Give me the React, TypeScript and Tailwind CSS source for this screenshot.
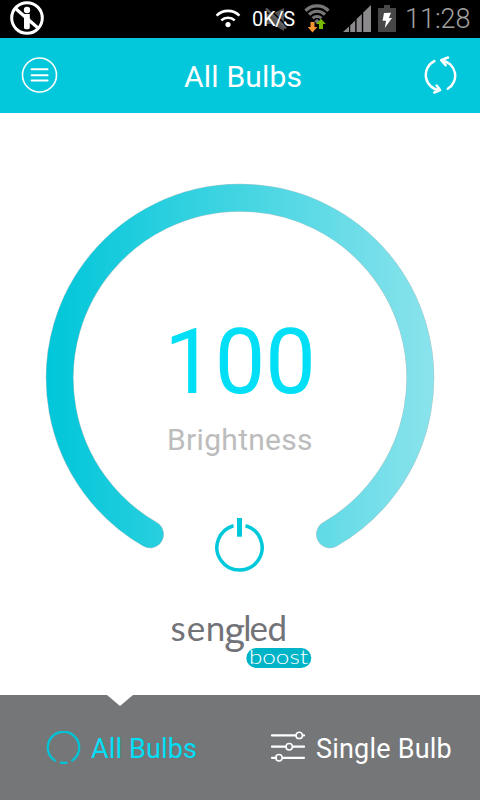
function BlockedIcon() {
  return (
    <svg className="ml-[10px] h-[34px] w-[34px]" viewBox="0 0 34 34" fill="none">
      <circle cx="17" cy="17" r="15.3" stroke="#fff" strokeWidth="3" />
      <circle cx="17" cy="9" r="3.2" fill="#fff" />
      <path d="M5.5 7.5l22.5 19.5" stroke="#fff" strokeWidth="3.2" />
      <path d="M14 13h5.8v13.5q0 1.8-1.5 1.8h-2.8q-1.5 0-1.5-1.8z" fill="#fff" />
      <path d="M12.5 16.5v5M21.8 13.5v4" stroke="#000" strokeWidth="1" />
    </svg>
  );
}

function SpeedWifiIcon() {
  return (
    <svg className="h-[20px] w-[26px]" viewBox="0 0 26 20" fill="none" stroke="#fff" strokeWidth="2.6">
      <path d="M1.6 7.6a16.2 16.2 0 0 1 22.8 0" />
      <path d="M6.3 12.4a9.6 9.6 0 0 1 13.4 0" />
      <circle cx="13" cy="16.6" r="2.6" fill="#fff" stroke="none" />
    </svg>
  );
}

function MuteIcon() {
  return (
    <svg className="absolute left-[13px] top-[6px] h-[26px] w-[22px]" viewBox="0 0 22 26">
      <path d="M1 8h6l12-6v23L7 18H1z" fill="#525252" />
      <path d="M2 1l20 19" stroke="#000" strokeWidth="1.6" />
      <path d="M1 2.5l20 20" stroke="#606060" strokeWidth="2.4" />
    </svg>
  );
}

function DataWifiIcon() {
  return (
    <svg className="h-[30px] w-[26px]" viewBox="0 0 26 30" fill="none">
      <path d="M1.5 7.8a16 16 0 0 1 23 0" stroke="#777" strokeWidth="3.4" />
      <path d="M5 11.6a11.2 11.2 0 0 1 16 0" stroke="#777" strokeWidth="3.2" />
      <path d="M8.6 15.3a6.3 6.3 0 0 1 8.8 0" stroke="#777" strokeWidth="2.8" />
      <path d="M10.4 18.3L13 16l2.6 2.3L13 21z" fill="#777" />
      <path d="M6.5 19h4v5h2.8l-4.800 5.5L3.7 24h2.8z" fill="#f79533" />
      <path d="M15 26v-5h-2.8l4.800-5.2 4.8 5.2H19v5z" fill="#76b900" />
    </svg>
  );
}

function SignalIcon() {
  return (
    <svg className="h-[27px] w-[29px]" viewBox="0 0 29 27" fill="#8b898b">
      <path d="M0 27l6-5.6V27zM7.2 27v-6.8l5-4.8V27zM13.6 27V14l5.2-5v18zM20.2 27V7.6l1.6-1.6L28 0v27z" />
    </svg>
  );
}

function BatteryIcon() {
  return (
    <svg className="h-[27px] w-[18px]" viewBox="0 0 18 27">
      <path d="M0 3h6V0h6v3h6v24H0z" fill="#474747" />
      <path d="M6 8l7-.2-2.2 5.2H14L6.8 23l1.3-7.3H4.6z" fill="#fff" />
    </svg>
  );
}

function StatusBar() {
  return (
    <div className="flex h-[38px] bg-black">
      <div className="pt-px">
        <BlockedIcon />
      </div>
      <div className="ml-[171px] pt-[8px]">
        <SpeedWifiIcon />
      </div>
      <div className="relative ml-[11px] w-[46px]">
        <MuteIcon />
        <span className="relative block pt-[7px] text-[20px] leading-[25px] tracking-[-0.3px] whitespace-nowrap text-white">0K/S</span>
      </div>
      <div className="ml-[6px] pt-[3px]">
        <DataWifiIcon />
      </div>
      <div className="ml-[13px] pt-[5px]">
        <SignalIcon />
      </div>
      <div className="ml-[6px] pt-[5px]">
        <BatteryIcon />
      </div>
      <span className="ml-[9px] pt-px text-[27px] font-light leading-[37px] whitespace-nowrap text-[#a0a0a0]">11:28</span>
    </div>
  );
}

function Header() {
  return (
    <header className="flex h-[75px] items-center bg-[#03c7da] pl-[21px] text-white">
      <svg className="h-[37px] w-[37px]" viewBox="0 0 37 37" fill="none" stroke="#fff" strokeLinecap="round">
        <circle cx="18.5" cy="18" r="17" strokeWidth="1.6" />
        <path d="M10.6 12.2h16M10.6 18.2h16M10.6 23.6h16" strokeWidth="2" />
      </svg>
      <h1 className="mt-[2px] ml-[126px] w-[238px] text-[30px] leading-[36px] tracking-[0.2px]">All Bulbs</h1>
      <svg className="mb-[1px] h-[38px] w-[38px] shrink-0" viewBox="0 0 38 38" fill="none" stroke="#fff" strokeWidth="2.5" strokeLinecap="round" strokeLinejoin="round">
        <path d="M12.3 5.1A15.4 15.4 0 0 0 17.7 34.2M12.3 36.5L18 34 14.7 29.6" />
        <path d="M25.8 32.8A15.4 15.4 0 0 0 19.8 4.4M26 1.5L19.2 4.2 23.6 9.2" />
      </svg>
    </header>
  );
}

function Dial() {
  return (
    <div className="relative h-[392px] w-[392px]">
      <svg className="absolute inset-0" viewBox="0 0 392 392" fill="none">
        <defs>
          <linearGradient id="ring" gradientUnits="userSpaceOnUse" x1="2" y1="0" x2="390" y2="0">
            <stop offset="0" stopColor="#00c6d9" />
            <stop offset="0.1" stopColor="#0dc9db" />
            <stop offset="0.5" stopColor="#43d5e2" />
            <stop offset="1" stopColor="#8ae3ec" />
          </linearGradient>
        </defs>
        <path d="M106 352.3A180.3 180.3 0 1 1 286 352.3" stroke="#a9c8cb" strokeWidth="27.8" strokeLinecap="round" />
        <path d="M106 352.3A180.3 180.3 0 1 1 286 352.3" stroke="url(#ring)" strokeWidth="26.8" strokeLinecap="round" />
      </svg>
      <div className="relative flex flex-col items-center">
        <div className="mt-[127px] text-[90px] leading-[108px] text-[#00dff5]">100</div>
        <div className="mt-[5px] text-[30px] leading-[36px] tracking-[0.3px] text-[#bcbcbc]">Brightness</div>
        <svg className="mt-[59px] h-[56px] w-[50px]" viewBox="0 0 50 56" fill="none" stroke="#00c8db">
          <path d="M18.5 8.7A22.6 22.6 0 1 0 30.5 8.7" strokeWidth="3.5" />
          <path d="M24.5 1v18.7" strokeWidth="5" />
        </svg>
      </div>
    </div>
  );
}

function Brand() {
  return (
    <svg className="h-[56px] w-[148px] overflow-visible" viewBox="0 0 148 56" aria-label="sengled boost">
      <text x="4.5 20.8 39.8 58.2 77.2 83.6 101.6" y="25" fontSize="35" fill="#727377" fontFamily="Lato, sans-serif">
        sen
        <tspan y="28.5" fontSize="40">g</tspan>
        <tspan y="25">led</tspan>
      </text>
      <rect x="80.3" y="32" width="65" height="20" rx="10" fill="#00b4c8" />
      <text x="83" y="47.7" fontSize="20" textLength="59" lengthAdjust="spacingAndGlyphs" fontFamily="Lato, sans-serif" fontWeight="300" fill="#fff">
        boost
      </text>
    </svg>
  );
}

function BottomNav() {
  return (
    <nav className="relative grid h-[105px] grid-cols-2 bg-[#757678]">
      <div className="absolute left-[107px] top-0 h-[11px] w-[26px] bg-white [clip-path:polygon(0_0,100%_0,50%_100%)]" />
      <div className="flex items-center pl-[45px] pt-[2px] text-[#00dff5]">
        <svg className="h-[36px] w-[36px]" viewBox="0 0 36 36" fill="none" stroke="#00c3d7" strokeWidth="2.3" strokeLinecap="round">
          <path d="M9.7 29.5A15.7 15.7 0 1 1 27.3 29.5M15.8 31.7q2.6.5 5.8 0" />
        </svg>
        <span className="ml-[10px] text-[27px] leading-[32px] tracking-[0.15px] whitespace-nowrap">All Bulbs</span>
      </div>
      <div className="flex items-center pl-[30px] pt-[2px] text-white">
        <svg className="mb-[3px] h-[32px] w-[36px]" viewBox="0 0 36 32" fill="none" stroke="#fff" strokeLinecap="round">
          <path d="M2 4.4h24M33 4.4h1M2 15.7h14M23 15.7h11M2 26.8h4M13 26.8h21" strokeWidth="2.3" />
          <g strokeWidth="1.5">
            <circle cx="29.2" cy="4.4" r="3.2" />
            <circle cx="19.2" cy="15.7" r="3.2" />
            <circle cx="9" cy="26.8" r="3.2" />
          </g>
        </svg>
        <span className="ml-[10px] text-[27px] leading-[32px] tracking-[0.2px] whitespace-nowrap">Single Bulb</span>
      </div>
    </nav>
  );
}

export default function App() {
  return (
    <div className="flex h-[800px] w-[480px] flex-col overflow-hidden bg-white font-[Roboto,sans-serif]">
      <StatusBar />
      <Header />
      <main className="flex flex-1 flex-col items-center pt-[69px]">
        <Dial />
        <div className="mt-[42px]">
          <Brand />
        </div>
      </main>
      <BottomNav />
    </div>
  );
}
